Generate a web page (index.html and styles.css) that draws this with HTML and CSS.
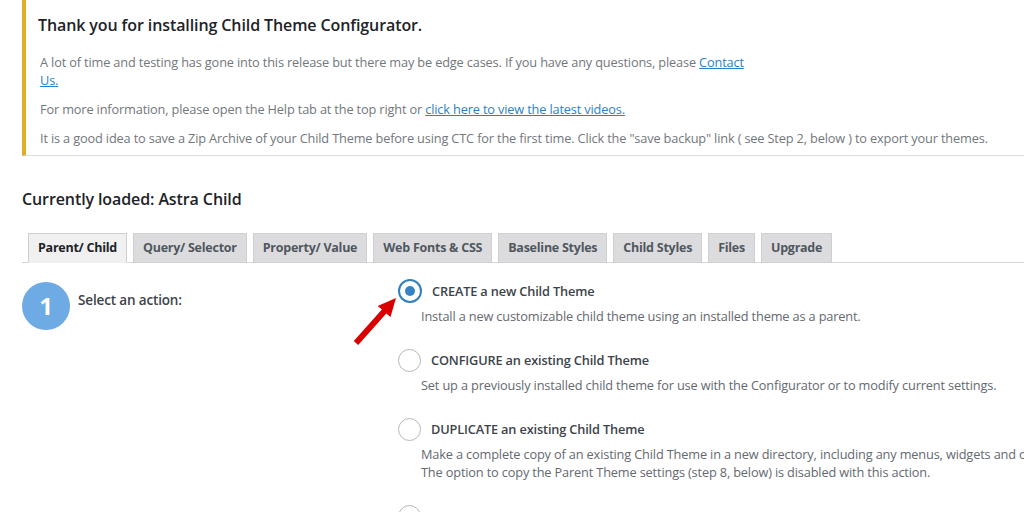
FILE: index.html
```html
<!DOCTYPE html>
<html lang="en">
<head>
  <meta charset="UTF-8" />
  <title>Child Theme Configurator</title>
  <link rel="stylesheet" href="styles.css">
</head>
<body>

  <div class="notice">
    <h2>Thank you for installing Child Theme Configurator.</h2>
    <p class="narrow">A lot of time and testing has gone into this release but there may be edge cases. If you have any questions, please <a href="#">Contact Us.</a></p>
    <p>For more information, please open the Help tab at the top right or <a href="#">click here to view the latest videos.</a></p>
    <p>It is a good idea to save a Zip Archive of your Child Theme before using CTC for the first time. Click the "save backup" link ( see Step 2, below ) to export your themes.</p>
  </div>

  <h2 class="loaded">Currently loaded: Astra Child</h2>

  <div class="tabs">
    <a class="tab active" href="#">Parent/ Child</a>
    <a class="tab" href="#">Query/ Selector</a>
    <a class="tab" href="#">Property/ Value</a>
    <a class="tab" href="#">Web Fonts &amp; CSS</a>
    <a class="tab" href="#">Baseline Styles</a>
    <a class="tab" href="#">Child Styles</a>
    <a class="tab" href="#">Files</a>
    <a class="tab" href="#">Upgrade</a>
  </div>

  <div class="step">
    <div class="step-head">
      <span class="step-num">1</span>
      <span class="step-label">Select an action:</span>
    </div>

    <div class="options">
      <div class="option">
        <div class="option-row">
          <span class="radio checked"></span>
          <span class="option-title">CREATE a new Child Theme</span>
        </div>
        <p class="option-desc">Install a new customizable child theme using an installed theme as a parent.</p>
      </div>
      <div class="option">
        <div class="option-row">
          <span class="radio"></span>
          <span class="option-title">CONFIGURE an existing Child Theme</span>
        </div>
        <p class="option-desc">Set up a previously installed child theme for use with the Configurator or to modify current settings.</p>
      </div>
      <div class="option">
        <div class="option-row">
          <span class="radio"></span>
          <span class="option-title">DUPLICATE an existing Child Theme</span>
        </div>
        <p class="option-desc">Make a complete copy of an existing Child Theme in a new directory, including any menus, widgets and other Customizer settings.<br>The option to copy the Parent Theme settings (step 8, below) is disabled with this action.</p>
      </div>
      <div class="option">
        <div class="option-row">
          <span class="radio"></span>
        </div>
      </div>
    </div>

    <!-- red pointer arrow -->
    <svg class="arrow" width="70" height="70" viewBox="0 0 70 70">
      <path d="M56 12 L50.5 31.1 L46.3 27.5 L18.2 59 L13.8 55 L41.9 23.5 L37.7 19.9 Z" fill="#d90000"/>
    </svg>
  </div>

</body>
</html>
```

FILE: styles.css
```css
body {
  margin: 0;
  background-color: #fff;
  color: #3c434a;
  font-family: 'Open Sans', 'Noto Sans', sans-serif;
  font-size: 12.75px;
  letter-spacing: -0.15px;
  line-height: 18px;
  overflow: hidden;
}

a {
  color: #2a7fc6;
}

.notice {
  margin-left: 22px;
  border-left: 4px solid #dfae24;
  border-bottom: 1px solid #dcdcdc;
  padding: 14px 12px 8px 12px;
}

.notice h2 {
  margin: 0 0 17px 0;
  font-size: 16px;
  font-weight: 600;
  letter-spacing: -0.1px;
  color: #1d2327;
  line-height: 22px;
}

.notice p {
  margin: 0 0 11px 2px;
  color: #72777c;
}

.notice p:last-child {
  margin-bottom: 0;
}

.notice p.narrow {
  max-width: 712px;
}

.loaded {
  margin: 31px 0 0 22px;
  font-size: 16px;
  font-weight: 600;
  letter-spacing: -0.1px;
  color: #1d2327;
  line-height: 24px;
}

.tabs {
  display: flex;
  gap: 6px;
  margin: 22px 0 0 22px;
  padding-left: 6px;
  border-bottom: 1px solid #d6d6d6;
}

.tab {
  display: block;
  padding: 6px 9px;
  margin-bottom: -1px;
  background-color: #dcdcde;
  border: 1px solid #cfcfcf;
  color: #50575e;
  font-weight: 700;
  font-size: 12.5px;
  letter-spacing: -0.25px;
  text-decoration: none;
  line-height: 16px;
}

.tab.active {
  background-color: #f0f0f1;
  border-bottom-color: #f0f0f1;
  color: #1d2327;
}

.step {
  position: relative;
  display: flex;
  margin: 16px 0 0 22px;
}

.step-head {
  flex-shrink: 0;
  width: 376px;
  display: flex;
  align-items: flex-start;
  gap: 8px;
}

.step-num {
  width: 48px;
  height: 48px;
  border-radius: 50%;
  background-color: #6eabe4;
  color: #fff;
  font-size: 24px;
  font-weight: 700;
  display: flex;
  align-items: center;
  justify-content: center;
  margin-top: 3px;
}

.step-label {
  font-weight: 600;
  font-size: 13.5px;
  margin-top: 12px;
}

.options {
  display: flex;
  flex-direction: column;
  gap: 23px;
}

.option-row {
  display: flex;
  align-items: center;
  gap: 10px;
  height: 24px;
}

.radio {
  flex-shrink: 0;
  width: 21px;
  height: 21px;
  border-radius: 50%;
  border: 1.5px solid #b8b8b8;
  position: relative;
}

.radio.checked {
  width: 20px;
  height: 20px;
  border: 2px solid #2f7fc1;
}

.radio.checked::after {
  content: "";
  position: absolute;
  left: 5px;
  top: 5px;
  width: 10px;
  height: 10px;
  border-radius: 50%;
  background-color: #3582c4;
}

.option-title {
  font-weight: 600;
  color: #3c434a;
}

.option-desc {
  margin: 4px 0 0 23px;
  color: #646970;
  white-space: nowrap;
}

.arrow {
  position: absolute;
  left: 318px;
  top: 7px;
}
```
